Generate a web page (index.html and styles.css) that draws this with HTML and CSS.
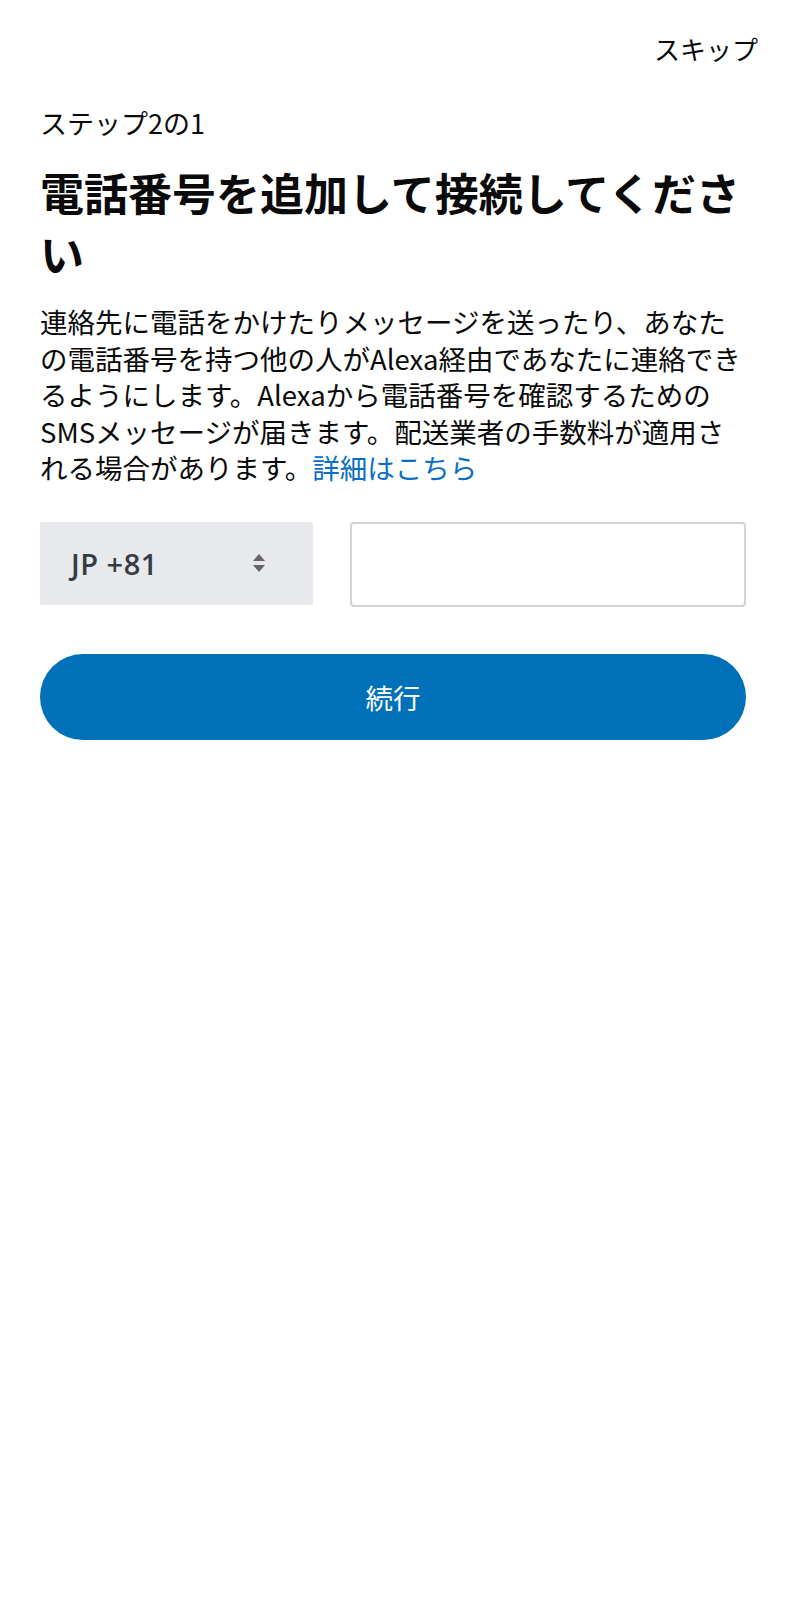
FILE: index.html
```html
<!DOCTYPE html>
<html lang="ja">
<head>
<meta charset="utf-8">
<title>電話番号を追加</title>
<link rel="stylesheet" href="styles.css">
</head>
<body>
<div class="topbar"><span class="skip">スキップ</span></div>
<main class="page">
  <div class="step">ステップ2の1</div>
  <h1 class="title">電話番号を追加して接続してください</h1>
  <p class="desc">連絡先に電話をかけたりメッセージを送ったり、あなたの電話番号を持つ他の人がAlexa経由であなたに連絡できるようにします。Alexaから電話番号を確認するためのSMSメッセージが届きます。配送業者の手数料が適用される場合があります。<a class="link" href="#">詳細はこちら</a></p>
  <div class="form-row">
    <div class="select">
      <span class="select-text">JP +81</span>
      <svg class="arrows" width="14" height="20" viewBox="0 0 14 20"><path d="M7 1 L13 8 L1 8 Z" fill="#666"/><path d="M1 12 L13 12 L7 19 Z" fill="#666"/></svg>
    </div>
    <div class="input"></div>
  </div>
  <button class="btn">続行</button>
</main>
</body>
</html>
```
FILE: styles.css
```css
html, body {
  margin: 0;
  padding: 0;
  background: #fff;
}
body {
  font-family: "Noto Sans CJK JP", "Noto Sans", sans-serif;
  color: #0a0a0a;
}
.topbar {
  display: flex;
  justify-content: flex-end;
  padding: 32px 28px 0 0;
  font-size: 26px;
  line-height: 34px;
}
.page {
  padding: 0 40px;
}
.step {
  margin-top: 40px;
  font-size: 27px;
  line-height: 34px;
}
.title {
  margin: 22px 0 0;
  font-size: 44px;
  line-height: 60.5px;
  font-weight: 700;
}
.desc {
  margin: 20px 0 0;
  font-size: 27.5px;
  line-height: 36.6px;
}
.link {
  color: #0a6fc2;
  text-decoration: none;
}
.form-row {
  margin-top: 36px;
  display: flex;
  align-items: flex-start;
  gap: 37px;
}
.select {
  width: 273px;
  height: 83px;
  background: #e7e9ec;
  border-radius: 2px;
  display: flex;
  align-items: center;
  justify-content: space-between;
  padding: 0 47px 0 31px;
  box-sizing: border-box;
}
.select-text {
  font-size: 29px;
  font-weight: 600;
  letter-spacing: 0.5px;
  color: #353b42;
  font-family: "Open Sans", "Noto Sans", sans-serif;
}
.input {
  flex: 1;
  height: 85px;
  border: 2px solid #d4d4d4;
  border-radius: 4px;
  box-sizing: border-box;
}
.btn {
  display: block;
  margin-top: 47px;
  width: 100%;
  height: 86px;
  border: none;
  border-radius: 43px;
  background: #0070b9;
  color: #fff;
  font-family: "Noto Sans CJK JP", sans-serif;
  font-size: 27.5px;
}
```
